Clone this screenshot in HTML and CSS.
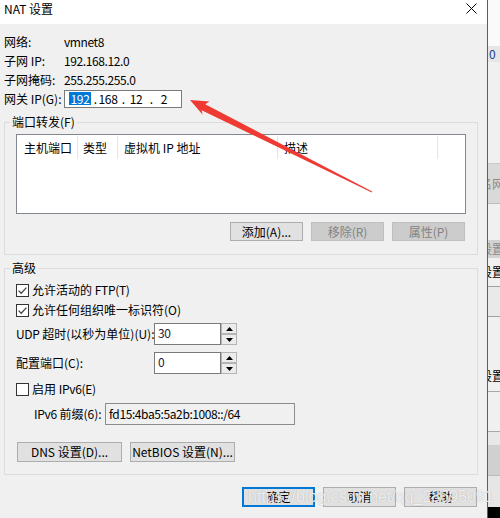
FILE: index.html
```html
<!DOCTYPE html>
<html>
<head>
<meta charset="utf-8">
<link rel="stylesheet" href="styles.css">
</head>
<body>
<div class="screen">
  <div class="dialog">
    <div class="titlebar">
      <span class="title">NAT 设置</span>
      <svg class="close" viewBox="0 0 11 11"><path d="M0.5 0.5 L10.5 10.5 M10.5 0.5 L0.5 10.5" stroke="#000" stroke-width="1" fill="none"/></svg>
    </div>
    <div class="content">
      <div class="info">
        <span class="k">网络:</span><span class="v">vmnet8</span>
        <span class="k">子网 IP:</span><span class="v">192.168.12.0</span>
        <span class="k">子网掩码:</span><span class="v">255.255.255.0</span>
        <span class="k">网关 IP(G):</span>
        <div class="ipbox">
          <span class="oct"><span class="sel">192</span></span><span class="dot">.</span>
          <span class="oct">168</span><span class="dot">.</span>
          <span class="oct">12</span><span class="dot">.</span>
          <span class="oct">2</span>
        </div>
      </div>

      <fieldset class="group g1">
        <legend>端口转发(F)</legend>
        <div class="listview">
          <div class="lv-head">
            <div class="lv-col c1">主机端口</div>
            <div class="lv-col c2">类型</div>
            <div class="lv-col c3">虚拟机 IP 地址</div>
            <div class="lv-col c4">描述</div>
          </div>
        </div>
        <div class="btnrow">
          <button class="btn">添加(A)...</button>
          <button class="btn dis">移除(R)</button>
          <button class="btn dis">属性(P)</button>
        </div>
      </fieldset>

      <fieldset class="group g2">
        <legend>高级</legend>
        <div class="cbrow">
          <svg class="cb" viewBox="0 0 13 13"><rect x="0.5" y="0.5" width="12" height="12" fill="#fff" stroke="#333"/><path d="M2.6 6.6 L5.2 9.2 L10.4 3.6" stroke="#444" stroke-width="1.3" fill="none"/></svg>
          <span>允许活动的 <span class="lat">FTP(T)</span></span>
        </div>
        <div class="cbrow">
          <svg class="cb" viewBox="0 0 13 13"><rect x="0.5" y="0.5" width="12" height="12" fill="#fff" stroke="#333"/><path d="M2.6 6.6 L5.2 9.2 L10.4 3.6" stroke="#444" stroke-width="1.3" fill="none"/></svg>
          <span>允许任何组织唯一标识符(O)</span>
        </div>
        <div class="frow r-udp">
          <span class="flabel"><span class="lat">UDP</span> 超时(以秒为单位)(U):</span>
          <div class="spin">
            <div class="spin-input">30</div>
            <div class="spin-btns">
              <div class="spin-btn"><svg viewBox="0 0 7 4"><path d="M0 4 L3.5 0 L7 4 Z" fill="#000"/></svg></div>
              <div class="spin-btn"><svg viewBox="0 0 7 4"><path d="M0 0 L7 0 L3.5 4 Z" fill="#000"/></svg></div>
            </div>
          </div>
        </div>
        <div class="frow r-port">
          <span class="flabel">配置端口(C):</span>
          <div class="spin">
            <div class="spin-input">0</div>
            <div class="spin-btns">
              <div class="spin-btn"><svg viewBox="0 0 7 4"><path d="M0 4 L3.5 0 L7 4 Z" fill="#000"/></svg></div>
              <div class="spin-btn"><svg viewBox="0 0 7 4"><path d="M0 0 L7 0 L3.5 4 Z" fill="#000"/></svg></div>
            </div>
          </div>
        </div>
        <div class="cbrow r-v6">
          <svg class="cb" viewBox="0 0 13 13"><rect x="0.5" y="0.5" width="12" height="12" fill="#fff" stroke="#333"/></svg>
          <span>启用 <span class="lat">IPv6(E)</span></span>
        </div>
        <div class="frow r-prefix">
          <span class="plabel"><span class="lat">IPv6</span> 前缀(6):</span>
          <div class="prefix">fd15:4ba5:5a2b:1008::/64</div>
        </div>
        <div class="dnsrow">
          <button class="btn wide">DNS 设置(D)...</button>
          <button class="btn wide">NetBIOS 设置(N)...</button>
        </div>
      </fieldset>

      <div class="footer">
        <button class="btn default">确定</button>
        <button class="btn">取消</button>
        <button class="btn">帮助</button>
      </div>
    </div>
  </div>
  <div class="strip">
    <div class="s s1"></div>
    <div class="s s2"><span class="sc blue">0</span></div>
    <div class="s s3"></div>
    <div class="s s4"><span class="sc gray cut">名网</span></div>
    <div class="s s5"></div>
    <div class="s s6"><span class="sc gray cut">设置</span></div>
    <div class="s s7"><span class="sc cut">设置</span></div>
    <div class="s s8"></div>
    <div class="s s9"><span class="sc cut">设置</span></div>
    <div class="s s10"></div>
    <div class="s s11"></div>
    <div class="s s12"></div>
    <div class="s s13"></div>
    <div class="s s14"></div>
  </div>
</div>

<svg class="arrow" viewBox="0 0 500 518">
  <polygon points="190,100 209.5,101.4 205.2,104.2 372.2,191.6 371.8,192.4 201.6,110.3 202.7,114.8" fill="#ef3a34"/>
</svg>

<div class="watermark">https://blog.csdn.net/qq_28695091</div>
</body>
</html>
```

FILE: styles.css
```css
* { box-sizing: border-box; }
html, body { margin: 0; padding: 0; }
body {
  width: 500px;
  height: 518px;
  overflow: hidden;
  position: relative;
  background: #f0f0f0;
  font-family: "Noto Sans CJK SC", "Noto Sans", sans-serif;
  font-size: 12px;
  color: #000;
}
.screen { display: flex; height: 518px; }
.lat { letter-spacing: -0.3px; }

.dialog {
  width: 488px;
  flex: none;
  border-right: 1px solid #5e5e5e;
  background: #f0f0f0;
  display: flex;
  flex-direction: column;
}
.titlebar {
  height: 24px;
  background: #fff;
  display: flex;
  align-items: flex-start;
  justify-content: space-between;
  padding: 1px 10px 0 4px;
}
.title { line-height: 16px; }
.close { width: 11px; height: 11px; margin-top: 2px; }

.content { padding: 8px 9px 0 4px; }

.info {
  display: grid;
  grid-template-columns: 60px auto;
  grid-auto-rows: 19px;
  align-items: center;
  justify-content: start;
}
.k, .v { line-height: 16px; }
.v { letter-spacing: -0.4px; }
.ipbox {
  align-self: end;
  width: 118px;
  height: 18px;
  border: 1px solid #7a7a7a;
  background: #fff;
  display: flex;
  align-items: center;
  padding-left: 4px;
  line-height: 14px;
}
.oct { width: 22px; text-align: center; letter-spacing: -0.3px; }
.dot { width: 6px; text-align: right; }
.sel { background: #0078d7; color: #fff; padding: 0 1px; display: inline-block; line-height: 13px; }

.group {
  margin: 0;
  border: 1px solid #dcdcdc;
  padding: 4px 11px 13px 11px;
  min-inline-size: 0;
}
.group legend {
  padding: 0 2px;
  margin-left: -6px;
  line-height: 16px;
}
.g1 { margin-top: 6px; }
.g2 { margin-top: 5px; padding-bottom: 12px; }

.listview {
  height: 80px;
  background: #fff;
  border: 1px solid #828790;
}
.lv-head { display: flex; }
.lv-col {
  margin-top: 1px;
  height: 23px;
  border-right: 1px solid #e5e5e5;
  padding: 3px 0 0 6px;
  line-height: 18px;
  white-space: nowrap;
}
.c1 { width: 61px; padding-left: 7px; }
.c2 { width: 40px; padding-left: 5px; }
.c3 { width: 160px; }
.c4 { width: 160px; }

.btnrow {
  margin-top: 8px;
  display: flex;
  justify-content: flex-end;
  gap: 8px;
  padding-right: 1px;
}
.btn {
  width: 73px;
  height: 19px;
  padding: 0;
  border: 1px solid #adadad;
  background: #e1e1e1;
  font: inherit;
  line-height: 16px;
  color: #000;
  white-space: nowrap;
}
.btn.dis { background: #cccccc; border-color: #bfbfbf; color: #838383; }

.cbrow { display: flex; align-items: center; height: 20px; gap: 3px; line-height: 16px; }
.cb { width: 13px; height: 13px; flex: none; }

.frow { display: flex; align-items: center; height: 22px; line-height: 16px; }
.r-udp { margin-top: 3px; }
.r-port { margin-top: 7px; }
.r-v6 { margin-top: 5px; }
.r-prefix { margin-top: 4px; padding-left: 18px; }
.flabel { width: 138px; flex: none; white-space: nowrap; }

.spin { display: flex; height: 22px; }
.spin-input {
  width: 67px;
  height: 22px;
  border: 1px solid #7a7a7a;
  background: #fff;
  padding: 1px 0 0 3px;
  line-height: 16px;
  color: #1a1a3a;
  letter-spacing: -0.3px;
}
.spin-btns { width: 16px; display: flex; flex-direction: column; }
.spin-btn {
  height: 11px;
  border: 1px solid #b4b4b4;
  background: #ececec;
  display: flex;
  align-items: center;
  justify-content: center;
}
.spin-btn svg { width: 7px; height: 4px; }

.plabel { width: 71px; flex: none; white-space: nowrap; }
.prefix {
  width: 190px;
  height: 22px;
  border: 1px solid #8c8c8c;
  background: #f0f0f0;
  padding: 2px 0 0 3px;
  line-height: 16px;
  letter-spacing: -0.4px;
}

.dnsrow { margin-top: 17px; display: flex; gap: 8px; padding-left: 1px; }
.btn.wide { width: 105px; height: 20px; }

.footer {
  margin-top: 12px;
  display: flex;
  justify-content: flex-end;
  gap: 8px;
  margin-right: 1px;
}
.footer .btn { height: 20px; }
.btn.default { border-color: #0078d7; box-shadow: inset 0 0 0 1px #0078d7; }

.strip {
  flex: 1;
  display: flex;
  flex-direction: column;
  overflow: hidden;
  background: #f0f0f0;
}
.s { flex: none; overflow: hidden; display: flex; align-items: center; white-space: nowrap; }
.s1 { height: 46px; background: #fafafa; }
.s2 { height: 16px; background: #e6e6e6; }
.s3 { height: 101px; background: #f0f0f0; }
.s4 { height: 40px; background: #d9d9d9; border-top: 1px solid #c8c8c8; }
.s5 { height: 37px; background: #f0f0f0; border-top: 1px solid #bdbdbd; }
.s6 { height: 18px; background: #d2d2d2; }
.s7 { height: 29px; background: #f0f0f0; border-bottom: 1px solid #a0a0a0; }
.s8 { height: 30px; background: #e9e9e9; border-bottom: 1px solid #a0a0a0; }
.s9 { height: 75px; background: #f0f0f0; align-items: flex-end; padding-bottom: 8px; border-bottom: 1px solid #a8a8a8; }
.s10 { height: 40px; background: #f0f0f0; border-bottom: 1px solid #a8a8a8; }
.s11 { height: 13px; background: #e8e8e8; }
.s12 { height: 30px; background: #d0d0d0; }
.s13 { height: 32px; background: #e6e6e6; border-top: 1px solid #bbb; }
.s14 { height: 11px; background: #000; }
.sc { font-size: 12px; line-height: 14px; }
.sc.cut { margin-left: -8px; }
.sc.blue { color: #1c3f8f; padding-left: 1px; }
.sc.gray { color: #8a8a8a; }

.arrow {
  position: absolute;
  left: 0;
  top: 0;
  width: 500px;
  height: 518px;
  pointer-events: none;
}
.watermark {
  position: absolute;
  left: 248px;
  top: 487px;
  font-family: "Liberation Sans", sans-serif;
  font-size: 16px;
  line-height: 20px;
  color: rgba(255, 255, 255, 0.82);
  text-shadow: 0 0 1px rgba(110, 110, 110, 0.55);
  white-space: nowrap;
  pointer-events: none;
}
```
